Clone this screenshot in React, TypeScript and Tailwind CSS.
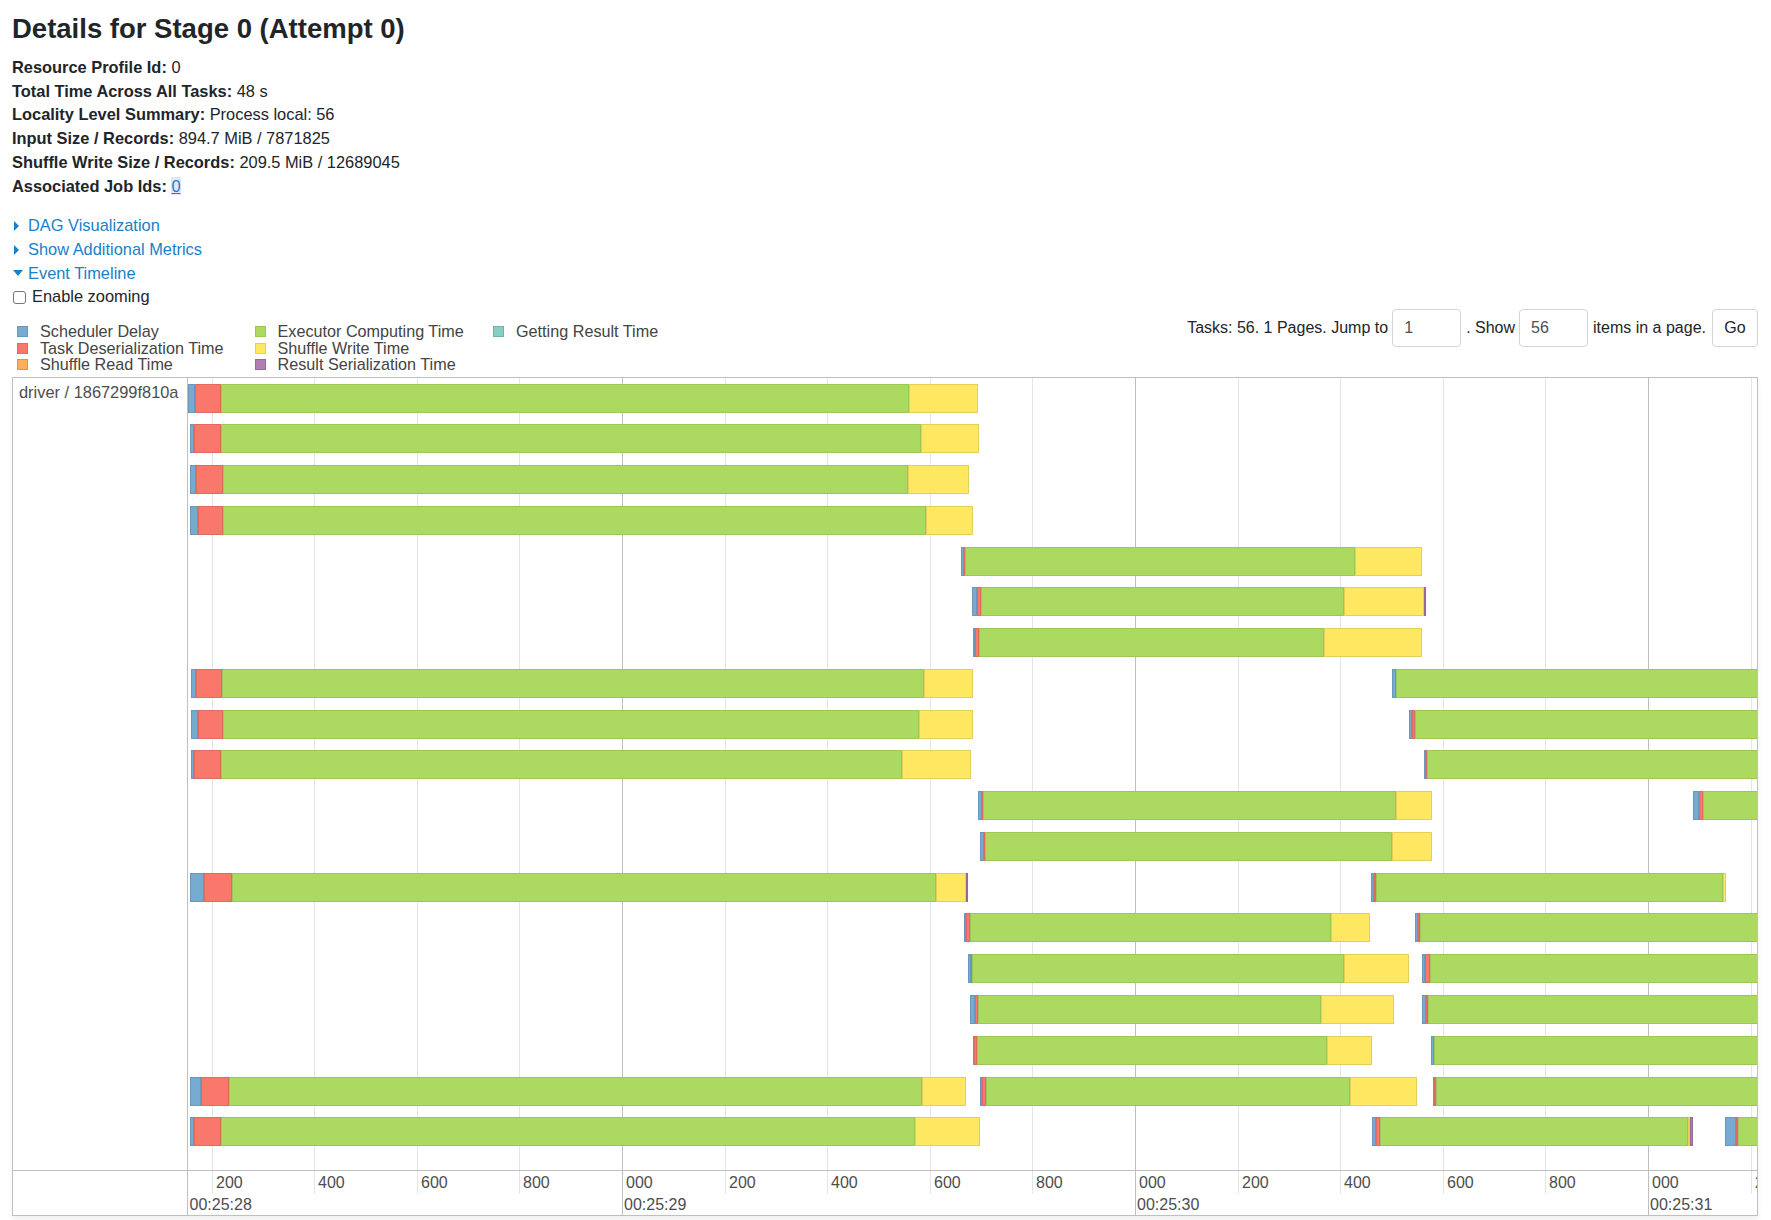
import React from 'react';

const SEG_CLASS: Record<string, string> = {
  S: 'bg-[#77aad0] shadow-[inset_0_0_0_1px_#6a98bc]',
  D: 'bg-[#f9776b] shadow-[inset_0_0_0_1px_#dd6b60]',
  E: 'bg-[#acd960] shadow-[inset_0_0_0_1px_#9cc658]',
  W: 'bg-[#fee862] shadow-[inset_0_0_0_1px_#e4cf5a]',
  R: 'bg-[#b17db2] shadow-[inset_0_0_0_1px_#966a98]',
  G: 'bg-[#86cfc3] shadow-[inset_0_0_0_1px_#72b1a6]',
  F: 'bg-[#fdae5a] shadow-[inset_0_0_0_1px_#d99648]',
};

type Seg = [string, number];
interface Bar {
  x: number;
  s: Seg[];
}

const END = 1762;

const ROWS: Bar[][] = [
  [{ x: 187.5, s: [['S', 195.4], ['D', 221.4], ['E', 909.3], ['W', 977.6]] }],
  [{ x: 189.6, s: [['S', 194.4], ['D', 220.9], ['E', 921], ['W', 979.2]] }],
  [{ x: 189.6, s: [['S', 196.5], ['D', 223.5], ['E', 907.7], ['W', 968.6]] }],
  [{ x: 189.6, s: [['S', 197.6], ['D', 223], ['E', 925.7], ['W', 973.4]] }],
  [{ x: 961.2, s: [['S', 964.4], ['D', 965.4], ['E', 1355.5], ['W', 1421.7]] }],
  [{ x: 972.3, s: [['S', 977.1], ['D', 980.8], ['E', 1344.3], ['W', 1424.4], ['R', 1426]] }],
  [{ x: 972.9, s: [['S', 975], ['D', 979.2], ['E', 1323.7], ['W', 1422.3]] }],
  [
    { x: 190.7, s: [['S', 196.5], ['D', 222.5], ['E', 923.6], ['W', 973.4]] },
    { x: 1392, s: [['S', 1396.3], ['E', END]] },
  ],
  [
    { x: 190.7, s: [['S', 197.6], ['D', 223.5], ['E', 918.8], ['W', 973.4]] },
    { x: 1409, s: [['S', 1411.6], ['D', 1415.4], ['E', END]] },
  ],
  [
    { x: 190.7, s: [['S', 194.4], ['D', 221.4], ['E', 901.9], ['W', 970.7]] },
    { x: 1424.4, s: [['S', 1426.5], ['D', 1427.5], ['E', END]] },
  ],
  [
    { x: 978.2, s: [['S', 981.9], ['D', 982.9], ['E', 1395.7], ['W', 1432.3]] },
    { x: 1693, s: [['S', 1699.4], ['D', 1703.1], ['E', END]] },
  ],
  [{ x: 979.7, s: [['S', 984], ['D', 985], ['E', 1392], ['W', 1432.3]] }],
  [
    { x: 190.1, s: [['S', 203.9], ['D', 232], ['E', 935.8], ['W', 966], ['R', 968]] },
    { x: 1370.8, s: [['S', 1374], ['D', 1376.1], ['E', 1723.2], ['W', 1726.4]] },
  ],
  [
    { x: 963.8, s: [['S', 966.5], ['D', 970.2], ['E', 1331.1], ['W', 1370.3]] },
    { x: 1415.4, s: [['S', 1418.5], ['D', 1419.6], ['E', END]] },
  ],
  [
    { x: 968.1, s: [['S', 970.7], ['D', 972.3], ['E', 1343.8], ['W', 1409.5]] },
    { x: 1421.7, s: [['S', 1425.4], ['D', 1429.7], ['E', END]] },
  ],
  [
    { x: 970.2, s: [['S', 975], ['D', 977.6], ['E', 1321], ['W', 1393.6]] },
    { x: 1421.7, s: [['S', 1426.5], ['D', 1428], ['E', END]] },
  ],
  [
    { x: 973.4, s: [['S', 974.5], ['D', 977.1], ['E', 1326.9], ['W', 1371.9]] },
    { x: 1430.7, s: [['S', 1434.4], ['E', END]] },
  ],
  [
    { x: 190.1, s: [['S', 200.7], ['D', 229.4], ['E', 922.5], ['W', 966.5]] },
    { x: 979.7, s: [['S', 982.4], ['D', 985.6], ['E', 1350.2], ['W', 1417.5]] },
    { x: 1433.4, s: [['S', 1434.4], ['D', 1436.5], ['E', END]] },
  ],
  [
    { x: 190.1, s: [['S', 193.8], ['D', 220.9], ['E', 914.6], ['W', 979.7]] },
    { x: 1372.4, s: [['S', 1375.6], ['D', 1380.4], ['E', 1687.8], ['W', 1690.4], ['R', 1693]] },
    { x: 1724.9, s: [['S', 1736], ['D', 1737.6], ['E', END]] },
  ],
];

const CHART_LEFT = 188;
const ROW_TOP = 6;
const ROW_PITCH = 40.76;

const TICKS = Array.from({ length: 16 }, (_, i) => {
  const k = i - 4;
  return { k, x: Math.round(622 + k * 102.6), major: k % 5 === 0 };
});

const MAJORS = [
  { label: '00:25:28', x: 189.5 },
  { label: '00:25:29', x: 624 },
  { label: '00:25:30', x: 1137 },
  { label: '00:25:31', x: 1650 },
];

const LEGEND: { t: string; label: string }[][] = [
  [
    { t: 'S', label: 'Scheduler Delay' },
    { t: 'D', label: 'Task Deserialization Time' },
    { t: 'F', label: 'Shuffle Read Time' },
  ],
  [
    { t: 'E', label: 'Executor Computing Time' },
    { t: 'W', label: 'Shuffle Write Time' },
    { t: 'R', label: 'Result Serialization Time' },
  ],
  [{ t: 'G', label: 'Getting Result Time' }],
];

function RightArrow() {
  return (
    <svg width="16" height="12" viewBox="0 0 16 12" className="flex-none">
      <polygon points="2,1 7,6 2,11" fill="#1a80c8" />
    </svg>
  );
}

function DownArrow() {
  return (
    <svg width="16" height="8" viewBox="0 0 16 8" className="flex-none">
      <polygon points="1,1 11,1 6,7" fill="#1a80c8" />
    </svg>
  );
}

export default function App() {
  return (
    <div className="w-full min-h-[1220px] bg-white pl-[12px] pr-[13px] pt-[12px] font-['Liberation_Sans',Arial,sans-serif] text-[#212529]">
      <h3 className="text-[27.5px] font-bold leading-[33px] text-[#212529]">Details for Stage 0 (Attempt 0)</h3>

      <ul className="mt-[11px] text-[16.4px] leading-[23.7px]">
        <li>
          <strong>Resource Profile Id:</strong> 0
        </li>
        <li>
          <strong>Total Time Across All Tasks:</strong> 48 s
        </li>
        <li>
          <strong>Locality Level Summary:</strong> Process local: 56
        </li>
        <li>
          <strong>Input Size / Records:</strong> 894.7 MiB / 7871825
        </li>
        <li>
          <strong>Shuffle Write Size / Records:</strong> 209.5 MiB / 12689045
        </li>
        <li>
          <strong>Associated Job Ids:</strong>{' '}
          <a href="#" className="text-[#1a80c8] underline bg-[#dce9f7]">
            0
          </a>
        </li>
      </ul>

      <div className="mt-[16px] text-[16.4px] leading-[23.7px]">
        <div className="flex items-center text-[#1a80c8]">
          <RightArrow />
          <span>DAG Visualization</span>
        </div>
        <div className="flex items-center text-[#1a80c8]">
          <RightArrow />
          <span>Show Additional Metrics</span>
        </div>
        <div className="flex items-center text-[#1a80c8]">
          <DownArrow />
          <span>Event Timeline</span>
        </div>
        <div className="flex items-center">
          <span className="ml-[1px] mr-[6px] h-[13px] w-[13px] flex-none rounded-[3px] border border-[#767676] bg-white" />
          <span>Enable zooming</span>
        </div>
      </div>

      <div className="flex items-start justify-between">
        <div className="flex pl-[5px] pt-[14px] text-[16.2px] leading-[16.7px] text-[#444]">
          {LEGEND.map((col, ci) => (
            <div key={ci} className={ci === 0 ? 'flex w-[237.5px] flex-col' : ci === 1 ? 'flex w-[238.5px] flex-col' : 'flex flex-col'}>
              {col.map((it) => (
                <div key={it.label} className="flex h-[16.7px] items-center gap-[12px]">
                  <span className={`h-[11px] w-[11px] flex-none ${SEG_CLASS[it.t]}`} />
                  <span>{it.label}</span>
                </div>
              ))}
            </div>
          ))}
        </div>

        <div className="flex h-[38px] items-center text-[16px] text-[#212529]">
          <span>Tasks: 56. 1 Pages. Jump to</span>
          <input
            readOnly
            defaultValue="1"
            className="ml-[4px] h-[38px] w-[69px] rounded-[4px] border border-[#d4d4d4] bg-white pl-[11px] text-[16px] text-[#495057] outline-none"
          />
          <span className="ml-[5px]">. Show</span>
          <input
            readOnly
            defaultValue="56"
            className="ml-[4px] h-[38px] w-[69px] rounded-[4px] border border-[#d4d4d4] bg-white pl-[11px] text-[16px] text-[#495057] outline-none"
          />
          <span className="ml-[5px]">items in a page.</span>
          <button className="ml-[6px] h-[38px] w-[46px] rounded-[4px] border border-[#d4d4d4] bg-white text-[16px] text-[#212529]">
            Go
          </button>
        </div>
      </div>

      <div className="mt-[3.5px] flex flex-col border border-[#bfbfbf] shadow-[0_4px_6px_rgba(0,0,0,0.06)]">
        <div className="flex h-[792px]">
          <div className="w-[175px] flex-none border-r border-[#bfbfbf] pl-[6px] pt-[4px] text-[16.4px] leading-[20px] text-[#4d4d4d]">
            driver / 1867299f810a
          </div>
          <div className="relative flex-1 overflow-hidden">
            {TICKS.map((t) => (
              <div
                key={t.k}
                className={t.major ? 'absolute bottom-0 top-0 w-px bg-[#bfbfbf]' : 'absolute bottom-0 top-0 w-px bg-[#e5e5e5]'}
                style={{ left: t.x - CHART_LEFT }}
              />
            ))}
            {ROWS.map((row, ri) =>
              row.map((bar, bi) => {
                let prev = bar.x;
                return (
                  <div
                    key={`${ri}-${bi}`}
                    className="absolute flex h-[29px]"
                    style={{ left: bar.x - CHART_LEFT, top: ROW_TOP + ri * ROW_PITCH }}
                  >
                    {bar.s.map(([t, end], si) => {
                      const w = end - prev;
                      prev = end;
                      return <div key={si} className={`h-full flex-none ${SEG_CLASS[t]}`} style={{ width: w }} />;
                    })}
                  </div>
                );
              })
            )}
          </div>
        </div>
        <div className="flex h-[45px] border-t border-[#bfbfbf]">
          <div className="w-[175px] flex-none border-r border-[#bfbfbf]" />
          <div className="relative flex-1 overflow-hidden text-[16px] leading-[20px] text-[#4d4d4d]">
            {TICKS.map((t) => (
              <div
                key={`l${t.k}`}
                className={t.major ? 'absolute bottom-0 top-0 w-px bg-[#bfbfbf]' : 'absolute top-0 h-[23px] w-px bg-[#e5e5e5]'}
                style={{ left: t.x - CHART_LEFT }}
              />
            ))}
            {TICKS.map((t) => (
              <div
                key={`m${t.k}`}
                className="absolute top-[2px] whitespace-nowrap"
                style={{ left: t.x - CHART_LEFT + 4 }}
              >
                {String((((t.k % 5) + 5) % 5) * 200).padStart(3, '0')}
              </div>
            ))}
            {MAJORS.map((m) => (
              <div
                key={m.label}
                className="absolute top-[24.5px] whitespace-nowrap"
                style={{ left: m.x - CHART_LEFT }}
              >
                {m.label}
              </div>
            ))}
          </div>
        </div>
      </div>
    </div>
  );
}
